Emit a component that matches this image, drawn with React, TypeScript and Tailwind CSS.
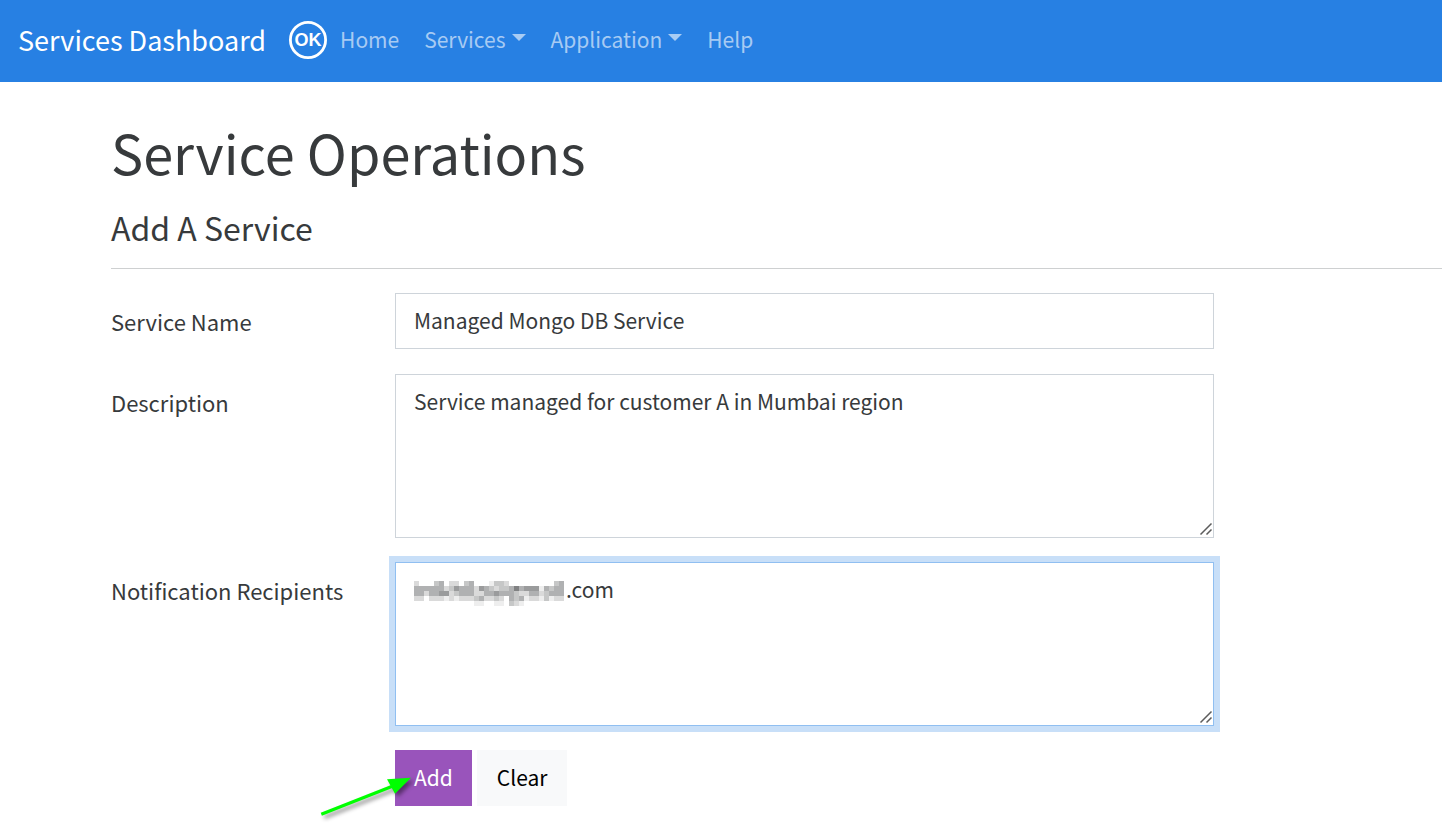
import { useState } from "react";

const fontStack = "font-['Noto_Sans_CJK_SC',sans-serif]";

// one digit per cell of the mask over the address, darker as it goes up
const mosaicRows = [
  "200034022034000133200000000034",
  "444444235444254323346455514344",
  "442445523444224454443224423444",
  "220222121222342232043412213122",
  "000000000000110011032100000000",
];
const shades = ["", "#eeeeee", "#dadada", "#c6c7c7", "#b0b1b2", "#9a9b9c", "#808182"];

const Mosaic = () => {
  return (
    <svg className="pointer-events-none absolute left-[19px] top-[19px] h-[25px] w-[150px]" viewBox="0 0 30 5" shapeRendering="crispEdges" aria-hidden="true">
      {mosaicRows.map((row, y) =>
        row.split("").map((shade, x) =>
          shade === "0" ? null : (
            <rect key={`${x}-${y}`} x={x} y={y} width={1} height={1} fill={shades[Number(shade)]} />
          )
        )
      )}
    </svg>
  );
};

const Grip = () => {
  return (
    <svg className="pointer-events-none absolute bottom-px right-px size-4 bg-white" viewBox="0 0 16 16" aria-hidden="true">
      <path d="M3.5 13.5 14.5 2.5M9.5 13.5 14.5 8.5" stroke="#5c5c5c" strokeWidth="1.5" fill="none" />
    </svg>
  );
};

const Caret = () => {
  return (
    <svg className="mb-1 ml-1.5 h-[7px] w-3.5" viewBox="0 0 14 7" fill="currentColor" aria-hidden="true">
      <path d="M0 0h14L7 7z" />
    </svg>
  );
};

const NavBar = () => {
  const links = [
    { name: "Home", menu: false },
    { name: "Services", menu: true },
    { name: "Application", menu: true },
    { name: "Help", menu: false },
  ];
  return (
    <nav className="flex h-[82px] items-center bg-[#2780e3] px-[18px] pb-0.5">
      <a href="#" className="mr-[22px] text-[27px] text-white">
        Services Dashboard
      </a>
      <svg className="size-10 shrink-0" viewBox="0 0 40 40" role="img" aria-label="OK">
        <circle cx="20" cy="20" r="17.6" fill="none" stroke="white" strokeWidth="2.8" />
        <text x="20" y="26" textAnchor="middle" fontSize="18" fontWeight="bold" fontFamily="Liberation Sans, sans-serif" fill="white">
          OK
        </text>
      </svg>
      <ul className="ml-3 flex gap-[25px] pb-0.5 text-[21px] text-white/60">
        {links.map((link) => (
          <li key={link.name}>
            <a href="#" className="flex items-center">
              {link.name}
              {link.menu && <Caret />}
            </a>
          </li>
        ))}
      </ul>
    </nav>
  );
};

const App = () => {
  const [name, setName] = useState("Managed Mongo DB Service");
  const [description, setDescription] = useState("Service managed for customer A in Mumbai region");
  const [recipients, setRecipients] = useState(".com");

  const label = "w-[284px] shrink-0 pt-2.5 text-[22px] leading-9";
  const field = "block w-full border bg-white px-[18px] pb-2.5 pt-2 outline-none";

  return (
    <div className={`${fontStack} text-[21px] leading-9 text-[#373a3c]`}>
      <NavBar />
      <main className="pb-7 pl-[111px] pt-[34px]">
        <h1 className="text-[54px] leading-[72px]">Service Operations</h1>
        <h2 className="mt-4 text-[32px] leading-[46px]">Add A Service</h2>
        <hr className="mt-[18px] border-[#ced0d1]" />
        <form className="mr-[228px] mt-6" onSubmit={(e) => e.preventDefault()}>
          <div className="mb-[25px] flex">
            <label htmlFor="name" className={label}>Service Name</label>
            <div className="grow">
              <input id="name" className={`${field} border-[#ced4da]`} value={name} onChange={(e) => setName(e.target.value)} />
            </div>
          </div>
          <div className="mb-6 flex">
            <label htmlFor="description" className={label}>Description</label>
            <div className="relative grow">
              <textarea
                id="description"
                rows={4}
                className={`${field} border-[#ced4da]`}
                value={description}
                onChange={(e) => setDescription(e.target.value)}
              />
              <Grip />
            </div>
          </div>
          <div className="mb-6 flex">
            <label htmlFor="recipients" className={label}>Notification Recipients</label>
            <div className="relative grow">
              <textarea
                id="recipients"
                rows={4}
                className={`${field} border-[#90bff1] indent-[152px] ring-6 ring-[#c8dff8]`}
                value={recipients}
                onChange={(e) => setRecipients(e.target.value)}
              />
              <Mosaic />
              <Grip />
            </div>
          </div>
          <div className="relative ml-[284px] flex gap-[5px]">
            <button type="submit" className="h-14 bg-[#9954bb] px-[19px] pb-0.5 text-white">Add</button>
            <button type="reset" className="h-14 bg-[#f8f9fa] px-5 pb-0.5 text-black">Clear</button>
            <svg className="pointer-events-none absolute -left-20 top-5 h-14 w-28 overflow-visible drop-shadow-[3px_3px_2px_rgba(0,0,0,0.45)]" viewBox="0 0 112 56" aria-hidden="true">
              <path d="M6.3 44.3 78 16" stroke="#00ff00" strokeWidth="3.3" />
              <path d="M96 7.7 72 9.3 80 23.7z" fill="#00ff00" />
            </svg>
          </div>
        </form>
      </main>
    </div>
  );
};

export default App;
